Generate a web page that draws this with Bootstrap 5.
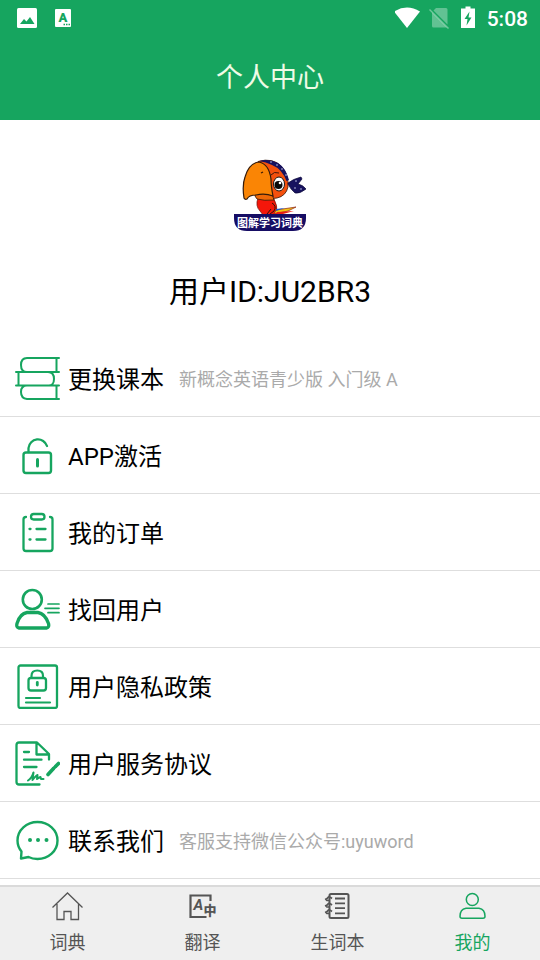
<!DOCTYPE html>
<html lang="zh-CN">
<head>
<meta charset="utf-8">
<meta name="viewport" content="width=device-width, initial-scale=1">
<title>个人中心</title>
<link href="https://cdn.jsdelivr.net/npm/bootstrap@5.3.0/dist/css/bootstrap.min.css" rel="stylesheet">
<style>
  :root { --brand: #16a55f; }
  body { font-family: Roboto, "Noto Sans CJK SC", sans-serif; color: #000; background: #fff; }
  .top-bar { background: var(--brand); color: #fff; }
  .status-bar { height: 36px; padding: 0 12px 0 16px; }
  .clock { font-size: 21px; line-height: 34px; padding-top: 2px; font-weight: 500; }
  .page-title { font-size: 27px; line-height: 80px; padding-top: 2px; padding-bottom: 2px; font-weight: 400; color: #effbe6; }
  .profile { padding: 39px 0 28px; }
  .user-id { font-size: 30px; line-height: 40px; margin-top: 41px; font-weight: 400; }
  .menu-row { height: 77px; padding: 0 15px; border: 0; color: #000; }
  .menu-row, .menu-row:last-child { border-bottom: 1px solid #dedede !important; }
  .menu-row svg { margin-right: 8px; }
  .row-title, .row-note { line-height: 32px; padding-top: 4px; }
  .row-title { font-size: 24px; }
  .row-note { font-size: 18px; color: #aaa; margin-left: 15px; }
  .line-icon { fill: none; stroke: var(--brand); stroke-width: 2; stroke-linecap: round; stroke-linejoin: round; }
  .tab-bar { background: #efefef; border-top: 2px solid #dadada; }
  .tab-link { height: 73px; padding-top: 4px; color: #555; font-size: 18px; line-height: 24px; text-decoration: none; }
  .tab-link svg { fill: none; stroke: currentColor; stroke-width: 1.5; margin-bottom: 10px; }
  .tab-link.active { color: var(--brand); }
</style>
</head>
<body>
<div class="d-flex flex-column min-vh-100">
  <header class="top-bar">
    <div class="status-bar d-flex align-items-center">
      <svg width="22" height="22" viewBox="0 0 22 22" aria-hidden="true"><rect x="1" y="1" width="20" height="20" rx="1.5" fill="#fff"/><path d="M4 17 8 12l2.5 2.5L14 10l4.500 7z" fill="#16a55f"/></svg>
      <svg class="ms-3" width="18" height="20" viewBox="0 0 18 20" aria-hidden="true"><rect x="1" y="1" width="16" height="18" rx="1" fill="#fff"/><text x="9" y="13.500" text-anchor="middle" font-family="Roboto" font-weight="900" font-size="13" fill="#16a55f">A</text><path d="M9.500 16.500h7" stroke="#16a55f" stroke-width="1.500" stroke-dasharray="1.500 1"/></svg>
      <svg class="ms-auto" width="26" height="22" viewBox="0 0 26 22" aria-hidden="true"><path d="M-1 4.500Q12-3.500 25 4.500L12 21z" fill="#fff"/></svg>
      <svg class="ms-2" width="22" height="22" viewBox="0 0 22 22" aria-hidden="true"><path d="M7 1h10q1.500 0 1.500 1.500v15L4.500 3.500zM3 5.500 18 20.500H4.500q-1.500 0-1.500-1.500z" fill="#fff" opacity=".33"/><path d="m.5 2.500 19 19" stroke="#fff" opacity=".38" stroke-width="1.500"/></svg>
      <svg class="ms-2 me-2" width="20" height="24" viewBox="0 0 20 24" aria-hidden="true"><path d="M2 2.500h4.500v-2h5v2H16v19.500H2z" fill="#fff"/><path d="m10.500 5.500-5 7.500h3L7.500 19.500l5-8h-3z" fill="#16a55f"/></svg>
      <span class="clock">5:08</span>
    </div>
    <h1 class="page-title text-center mb-0">个人中心</h1>
  </header>

  <main>
    <section class="profile text-center">
      <svg class="d-block mx-auto" width="72" height="72" viewBox="0 0 72 72" role="img" aria-label="图解学习词典">
        <path d="M24 39q-3 8 2 13l3 4h14q1-10-4-18z" fill="#f4160a" stroke="#6b1208" stroke-width=".7"/>
        <path d="M38 44q5 3 2 8l-4 3M33 55l4-5" fill="none" stroke="#301009"/>
        <path d="m42 51 20-3-8 4-14 3z" fill="#f3c414" stroke="#8d2110" stroke-width=".7"/>
        <path d="m43 53 17-1-11 3-9 1z" fill="#e81e14"/><path d="m42 50 9-1-9 3z" fill="#1c5bd0"/>
        <path d="M24 2.500Q39-2 48 8q7 9 6 20-2 9-11 11l-8 1-8-6z" fill="#f4500d" stroke="#351608" stroke-width=".8"/>
        <path d="M25 2Q35-1 44 4q8 5 11 17l-2.500 1Q48 10 38 6q-6-3-13-4z" fill="#17125f"/>
        <path d="M54 24q5-4 13-6l1 2-4 5q5 1 8 5-6 5-11 4-4-3-7-9z" fill="#17125f" stroke="#0b0938" stroke-width=".7"/>
        <g fill="#c8cbed"><circle cx="37" cy="3" r=".8"/><circle cx="43" cy="6" r=".8"/><circle cx="48" cy="10" r=".8"/><circle cx="52" cy="16" r=".8"/><circle cx="62" cy="22" r=".8"/><circle cx="61" cy="29" r=".8"/><circle cx="67" cy="30" r=".8"/></g>
        <ellipse cx="45" cy="25" rx="5.500" ry="7" fill="#fff" stroke="#1b1714"/>
        <circle cx="44.500" cy="26" r="4" fill="#090909"/><circle cx="46" cy="24" r="1.300" fill="#fff"/>
        <path d="M37 16q3-4 8-2" fill="none" stroke="#43160a"/>
        <path d="M21 34 37 32l3 9q-10 1-17-1-3-3-2-6z" fill="#ee6807" stroke="#351b0a" stroke-width=".8"/>
        <path d="M10 39Q8 26 11 18 15 4 25 3q10 2 12 17 0 7 2 17-8-3-17-1-7 0-9 4-2 1-3-1z" fill="#fa8505" stroke="#351b0a" stroke-width="1.200"/>
        <path d="m27 14 2-1" stroke="#3a1a08" stroke-width="1.300"/>
        <path d="M0 55h72v4q0 13-13 13H13Q0 72 0 59z" fill="#160d64"/>
        <text x="36" y="67.500" text-anchor="middle" font-family="Noto Sans CJK SC" font-size="11" font-weight="700" fill="#fff">图解学习词典</text>
      </svg>
      <h2 class="user-id mb-0">用户ID:JU2BR3</h2>
    </section>

    <nav class="list-group list-group-flush" aria-label="个人中心菜单">
      <a href="#" class="menu-row list-group-item list-group-item-action d-flex align-items-center">
        <svg class="line-icon flex-shrink-0" width="45" height="46" viewBox="0 0 45 46" aria-hidden="true"><path d="M44 3H12Q6 3 6 10t6 7h32M41.500 3v14M1 17h32q6 0 6 7t-6 6.500H1M3.500 17v13.500M44 30.500H12q-6 0-6 6.500t6 7h32M41.500 30.500V44"/></svg>
        <span class="row-title">更换课本</span><span class="row-note">新概念英语青少版 入门级 A</span>
      </a>
      <a href="#" class="menu-row list-group-item list-group-item-action d-flex align-items-center">
        <svg class="line-icon flex-shrink-0" width="45" height="46" viewBox="0 0 45 46" aria-hidden="true"><rect x="8.500" y="20.500" width="27.500" height="20.500" rx="2.500" stroke-width="2.400"/><path d="M13.500 20v-4a9.500 9.500 0 0 1 18.500-2" stroke-width="2.300"/><path d="M22.500 27.500V34" stroke-width="3"/></svg>
        <span class="row-title">APP激活</span>
      </a>
      <a href="#" class="menu-row list-group-item list-group-item-action d-flex align-items-center">
        <svg class="line-icon flex-shrink-0" width="45" height="46" viewBox="0 0 45 46" aria-hidden="true"><path d="M11 8q-2.500 0-2.500 2.500v29Q8.500 42 11 42h24q2.500 0 2.500-2.500v-29Q37.500 8 35 8M14.500 20h1M21.500 20h9M14.500 30.500h1M21.500 30.500h9" stroke-width="2.300"/><rect x="16" y="5" width="13.500" height="5.500" rx="2.700" stroke-width="2.300"/></svg>
        <span class="row-title">我的订单</span>
      </a>
      <a href="#" class="menu-row list-group-item list-group-item-action d-flex align-items-center">
        <svg class="line-icon flex-shrink-0" width="45" height="46" viewBox="0 0 45 46" aria-hidden="true"><circle cx="17.300" cy="13.500" r="9.500" stroke-width="2.600"/><path d="M12 26.500h11q7 1 10.500 11 1 4-2 4.500H4q-3-.5-2-4.500Q5 27.500 12 26.500z" stroke-width="3.300"/><path d="M33 18h11M30 22.300h14M33 26.700h11" stroke-width="1.700"/></svg>
        <span class="row-title">找回用户</span>
      </a>
      <a href="#" class="menu-row list-group-item list-group-item-action d-flex align-items-center">
        <svg class="line-icon flex-shrink-0" width="45" height="46" viewBox="0 0 45 46" aria-hidden="true"><rect x="3.500" y="2.500" width="38.500" height="42.500" rx="2" stroke-width="2.300"/><rect x="13.500" y="15" width="17.500" height="12.500" rx="2.500" stroke-width="2.300"/><path d="M16.500 14v-1q0-5.500 5.800-5.500T28 13v1M11 35h14M11 39.500h24" stroke-width="2.200"/><path d="M22.300 19.500V22" stroke-width="2.800"/></svg>
        <span class="row-title">用户隐私政策</span>
      </a>
      <a href="#" class="menu-row list-group-item list-group-item-action d-flex align-items-center">
        <svg class="line-icon flex-shrink-0" width="45" height="46" viewBox="0 0 45 46" aria-hidden="true"><path d="M24.500 44.500H4Q1.500 44.500 1.500 42V5Q1.500 2.500 4 2.500h18L34 14v5.500M21.500 3v11.500H34M9 12h5M9 19.700h17.500M9 27h12.500" stroke-width="2.300"/><path d="M13 40.500q3.500-2 5.500-8-.5 3-1 7.500 3-4 5-5l-.5 4q2-1.500 3.500-2l.5 2h2.500"/><path d="m43.500 23.500-3 3M38.500 28.500l-5.500 6" stroke-width="3.600"/><path d="m40.500 26.500-2 2" stroke-width="2.500"/></svg>
        <span class="row-title">用户服务协议</span>
      </a>
      <a href="#" class="menu-row list-group-item list-group-item-action d-flex align-items-center">
        <svg class="line-icon flex-shrink-0" width="45" height="46" viewBox="0 0 45 46" aria-hidden="true"><path d="M6.500 34.500C4 31.500 2.500 28 2.500 23.500 2.500 13 11.500 5 22.500 5s20 8 20 18.500-9 18.500-20 18.500q-5 0-9-2l-7.500 1.500z" stroke-width="2.400"/><path d="M15 23h.01M23 23h.01M31.500 23h.01" stroke-width="4"/></svg>
        <span class="row-title">联系我们</span><span class="row-note">客服支持微信公众号:uyuword</span>
      </a>
    </nav>
  </main>

  <nav class="tab-bar mt-auto" aria-label="主导航">
    <div class="row row-cols-4 g-0">
      <a href="#" class="col tab-link d-flex flex-column align-items-center">
        <svg width="32" height="30" viewBox="0 0 32 30" aria-hidden="true"><path d="M.5 16.500 15.500 2l15 14.500M5 13v15.500h7v-8h7v8h7.500V13" stroke-width="1.300"/></svg>
        <span>词典</span>
      </a>
      <a href="#" class="col tab-link d-flex flex-column align-items-center">
        <svg width="32" height="30" viewBox="0 0 32 30" aria-hidden="true"><path d="M23.500 10V4.500h-20v21.500h16" stroke-width="2.200"/><g fill="currentColor" stroke="none"><text x="11.500" y="19" text-anchor="middle" font-family="Roboto" font-style="italic" font-weight="700" font-size="15">A</text><text x="23" y="24" text-anchor="middle" font-family="Noto Sans CJK SC" font-weight="900" font-size="13">中</text></g></svg>
        <span>翻译</span>
      </a>
      <a href="#" class="col tab-link d-flex flex-column align-items-center">
        <svg width="32" height="30" viewBox="0 0 32 30" aria-hidden="true"><rect x="7.500" y="3" width="19" height="24" rx="1.500" stroke-width="2"/><path d="M13 7.500h10M13 12.300h10M13 17.200h10M13 22.300h10" stroke-width="1.800"/><path d="M10 7.500q-3-2.500-4-1t-2 1.500 1 1.500h3M10 14q-3-2.500-4-1t-2 1.500 1 1.500h3M10 20.500q-3-2.500-4-1t-2 1.500 1 1.500h3" stroke-width="1.700"/></svg>
        <span>生词本</span>
      </a>
      <a href="#" class="col tab-link active d-flex flex-column align-items-center" aria-current="page">
        <svg width="32" height="30" viewBox="0 0 32 30" aria-hidden="true"><circle cx="15.300" cy="8.500" r="6"/><path d="M9 17.300h13q6 1 6 8 0 2-2 2H5q-2 0-2-2 0-7 6-8z"/></svg>
        <span>我的</span>
      </a>
    </div>
  </nav>
</div>
<script src="https://cdn.jsdelivr.net/npm/bootstrap@5.3.0/dist/js/bootstrap.bundle.min.js"></script>
</body>
</html>
